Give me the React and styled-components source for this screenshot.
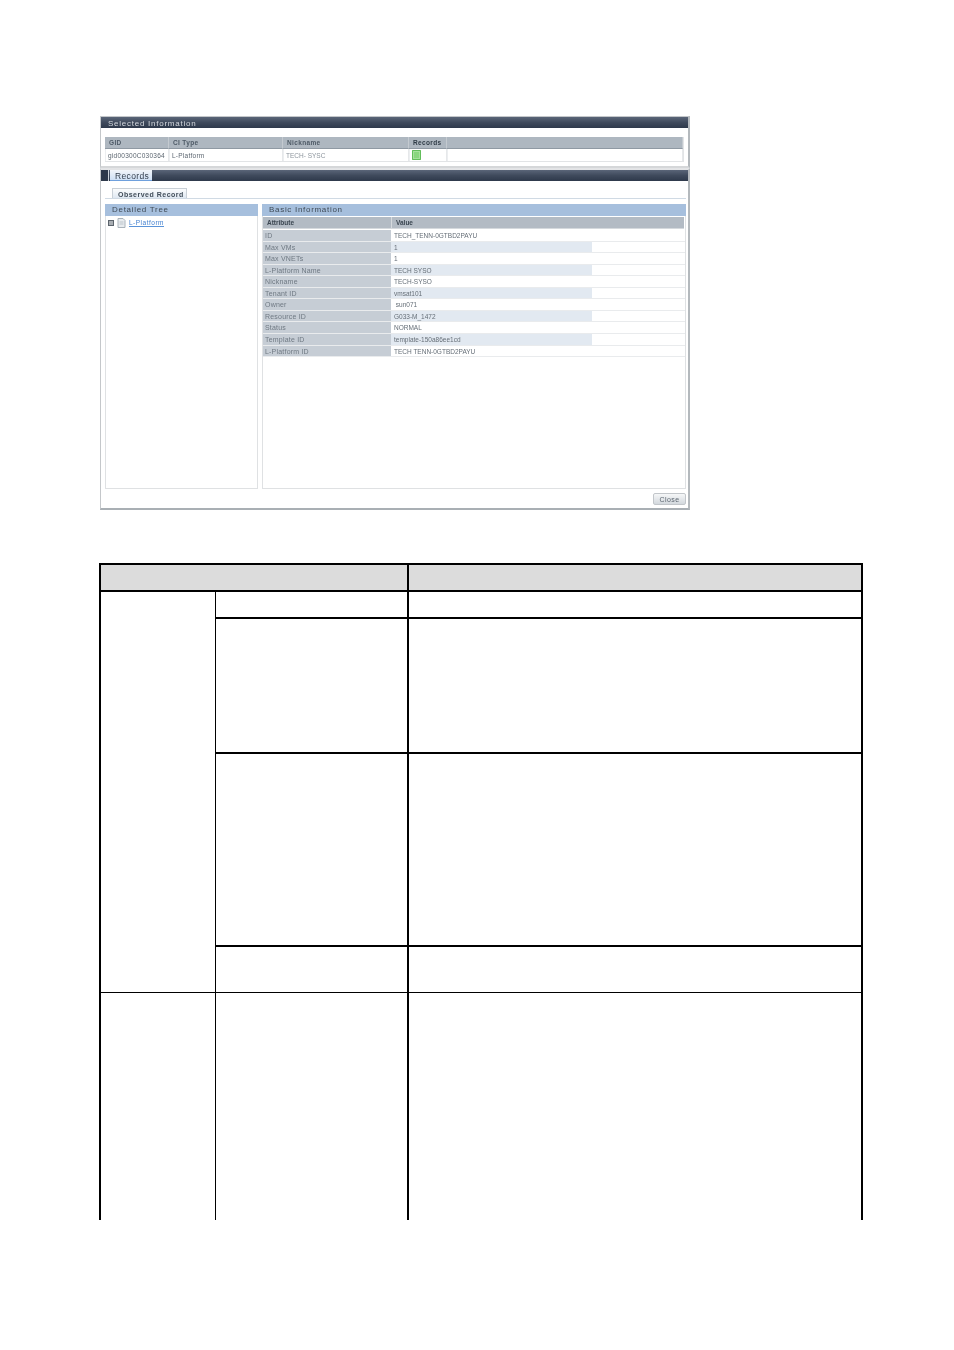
import React from "react";
import styled, { createGlobalStyle } from "styled-components";

const GlobalStyle = createGlobalStyle`
  html, body {
    margin: 0;
    padding: 0;
    background: #fff;
  }
`;

const basics = [
  ["ID", "TECH_TENN-0GTBD2PAYU", false],
  ["Max VMs", "1", true],
  ["Max VNETs", "1", false],
  ["L-Platform Name", "TECH SYSO", true],
  ["Nickname", "TECH-SYSO", false],
  ["Tenant ID", "vmsat101", true],
  ["Owner", " sun071", false],
  ["Resource ID", "G033-M_1472", true],
  ["Status", "NORMAL", false],
  ["Template ID", "template-150a86ee1cd", true],
  ["L-Platform ID", "TECH TENN-0GTBD2PAYU", false],
];

// rows sit on a 11.55px pitch, rounded so every separator lands on a pixel
const rowHeight = (i) => Math.round((i + 1) * 11.55) - Math.round(i * 11.55);

export default function App() {
  return (
    <Page>
      <GlobalStyle />
      <Shot>
        <SelectedPanel>
          <DarkBar>
            <BarTitle>Selected Information</BarTitle>
          </DarkBar>
          <SelectedBody>
            <SelectedGrid>
              <HeadCell>GID</HeadCell>
              <HeadCell>CI Type</HeadCell>
              <HeadCell>Nickname</HeadCell>
              <HeadCell $dark>Records</HeadCell>
              <HeadCell />
              <DataCell>gid00300C030364</DataCell>
              <DataCell>L-Platform</DataCell>
              <DataCell $faint>TECH- SYSC</DataCell>
              <DataCell>
                <GreenIcon />
              </DataCell>
              <DataCell />
            </SelectedGrid>
          </SelectedBody>
        </SelectedPanel>

        <RecordsPanel>
          <DarkBar>
            <BarStub />
            <RecordsTab>Records</RecordsTab>
          </DarkBar>
          <TabRow>
            <SubTab>Observed Record</SubTab>
          </TabRow>
          <Columns>
            <TreePane>
              <PaneTitle>Detailed Tree</PaneTitle>
              <TreeRow>
                <Expander />
                <svg width="9" height="10" viewBox="0 0 9 10">
                  <path d="M1 .5h5l2 2v7H1z" fill="#e8ecef" stroke="#a9b2ba" />
                  <path d="M2.5 4h4M2.5 6h4" stroke="#bcc4cb" />
                </svg>
                <TreeLink>L-Platform</TreeLink>
              </TreeRow>
            </TreePane>
            <InfoPane>
              <PaneTitle>Basic Information</PaneTitle>
              <InfoHead>
                <InfoHeadCell>Attribute</InfoHeadCell>
                <InfoHeadCell>Value</InfoHeadCell>
              </InfoHead>
              {basics.map(([name, value, shaded], i) => (
                <InfoRow key={name} $h={rowHeight(i)}>
                  <AttrCell>{name}</AttrCell>
                  <ValueCell $shaded={shaded}>{value}</ValueCell>
                </InfoRow>
              ))}
            </InfoPane>
          </Columns>
          <Footer>
            <CloseButton>Close</CloseButton>
          </Footer>
        </RecordsPanel>
      </Shot>

      <DocTable>
        <colgroup>
          <col width="116" />
          <col width="192" />
          <col width="456" />
        </colgroup>
        <tbody>
          <HeadRow>
            <HeadGroup colSpan="2" />
            <DescCell />
          </HeadRow>
          <Row $h={27}>
            <GroupCell rowSpan="4" />
            <ItemCell />
            <DescCell />
          </Row>
          <Row $h={135}>
            <ItemCell />
            <DescCell />
          </Row>
          <Row $h={193}>
            <ItemCell />
            <DescCell />
          </Row>
          <Row $h={47}>
            <ItemCell />
            <DescCell />
          </Row>
          <Row $h={228}>
            <GroupCell $thin />
            <ItemCell $thin />
            <DescCell $thin />
          </Row>
        </tbody>
      </DocTable>
    </Page>
  );
}

const Page = styled.div`
  width: 954px;
  height: 1350px;
  box-sizing: border-box;
  padding: 116px 0 0 99px;
  overflow: hidden;
  background: #fff;
`;

const Shot = styled.div`
  width: 590px;
  height: 394px;
  margin-left: 1px;
  display: flex;
  flex-direction: column;
  font-family: "Liberation Sans", Arial, sans-serif;
  font-size: 7px;
  color: #5c6670;
  filter: blur(0.45px);
`;

const SelectedPanel = styled.section`
  height: 52px;
  flex: none;
  box-sizing: border-box;
  border: 1px solid #c4c7ca;
  border-right: 2px solid #b4b9bd;
  border-bottom: 2px solid #d5d7d9;
  display: flex;
  flex-direction: column;
`;

const DarkBar = styled.div`
  height: 11px;
  flex: none;
  display: flex;
  align-items: flex-end;
  background: linear-gradient(#5a6578, #3f4a5c 50%, #2e394b);
`;

const BarTitle = styled.h2`
  margin: 3px 0 0 7px;
  align-self: center;
  font-size: 8px;
  line-height: 10px;
  font-weight: 400;
  letter-spacing: 0.75px;
  color: #d5d9de;
`;

const SelectedBody = styled.div`
  padding: 9px 4px 0 4px;
`;

const SelectedGrid = styled.div`
  display: grid;
  grid-template-columns: 64px 114px 126px 38px 1fr;
  grid-template-rows: 12px 12px;
  border-bottom: 1px solid #e2e4e6;
  border-right: 1px solid #e2e4e6;
`;

const HeadCell = styled.div`
  display: flex;
  align-items: center;
  padding-left: 4px;
  background: #aeb7c0;
  border-right: 1px solid #c4cad0;
  border-bottom: 1px solid #8f99a3;
  font-weight: 700;
  font-size: 6.5px;
  letter-spacing: 0.35px;
  color: ${(p) => (p.$dark ? "#2f3b46" : "#4e5a66")};
`;

const DataCell = styled.div`
  display: flex;
  align-items: center;
  padding-left: 2px;
  border-right: 1px solid #e6e8ea;
  border-left: 1px solid #eceef0;
  font-size: 6.5px;
  letter-spacing: ${(p) => (p.$faint ? "0" : "0.25px")};
  color: ${(p) => (p.$faint ? "#8d959d" : "#5c6670")};
`;

const GreenIcon = styled.span`
  display: block;
  width: 9px;
  height: 10px;
  border-radius: 1px;
  background: #8ad67f;
  box-shadow: inset 0 0 0 1px #62bd5a, inset 0 0 0 2px #a6e09c;
`;

const RecordsPanel = styled.section`
  flex: 1;
  box-sizing: border-box;
  display: flex;
  flex-direction: column;
  border-top: 2px solid #e3e4e6;
  border-left: 1px solid #c4c7ca;
  border-right: 2px solid #b4b9bd;
  border-bottom: 2px solid #a9afb4;
`;

const BarStub = styled.span`
  width: 7px;
  align-self: stretch;
  background: #2e394b;
  border-right: 1px solid #d0d6dc;
`;

const RecordsTab = styled.div`
  height: 11px;
  box-sizing: border-box;
  margin-left: 1px;
  padding: 2px 3px 0 5px;
  background: linear-gradient(#f2f5f9, #cfe0f4);
  border-bottom: 1px solid #6fa0dd;
  font-size: 8.5px;
  line-height: 9px;
  letter-spacing: 0.35px;
  color: #333e4c;
`;

const TabRow = styled.div`
  height: 18px;
  flex: none;
  box-sizing: border-box;
  display: flex;
  align-items: flex-end;
  margin: 0 2px 0 4px;
  padding-left: 7px;
  border-bottom: 1px solid #d0dae4;
`;

const SubTab = styled.div`
  width: 75px;
  height: 10px;
  box-sizing: border-box;
  padding: 2px 0 0 5px;
  border: 1px solid #c9d0d7;
  border-bottom: none;
  background: linear-gradient(#fbfcfd, #dfe8f2);
  font-size: 7px;
  font-weight: 700;
  line-height: 8px;
  letter-spacing: 0.5px;
  white-space: nowrap;
  color: #414d59;
`;

const Columns = styled.div`
  height: 285px;
  flex: none;
  display: flex;
  gap: 4px;
  margin: 5px 2px 0 4px;
`;

const PaneTitle = styled.h3`
  margin: 0 -1px;
  height: 12px;
  box-sizing: border-box;
  padding: 0 7px;
  background: #a6bfdd;
  font-size: 8px;
  font-weight: 400;
  line-height: 12px;
  letter-spacing: 0.7px;
  color: #3f4a56;
`;

const TreePane = styled.div`
  width: 153px;
  flex: none;
  box-sizing: border-box;
  border: 1px solid #dfe1e3;
  border-top: none;
`;

const TreeRow = styled.div`
  display: flex;
  align-items: center;
  gap: 3px;
  padding: 1px 0 0 2px;
  height: 11px;
`;

const Expander = styled.span`
  width: 4px;
  height: 4px;
  border: 1px solid #5c646c;
  background: #a9aeb3;
`;

const TreeLink = styled.a`
  color: #3f7fd0;
  border-bottom: 1px solid #5a93d8;
  line-height: 7px;
  font-size: 6.5px;
  letter-spacing: 0.5px;
`;

const InfoPane = styled.div`
  flex: 1;
  box-sizing: border-box;
  border: 1px solid #dfe1e3;
  border-top: none;
`;

const InfoHead = styled.div`
  display: grid;
  grid-template-columns: 128px 1fr;
  height: 12px;
  margin: 1px 1px 1px 0;
  background: #b3bbc4;
  border-bottom: 1px solid #d5d9dd;
  box-sizing: border-box;
`;

const InfoHeadCell = styled.div`
  padding-left: 4px;
  font-size: 6.5px;
  font-weight: 700;
  line-height: 11px;
  color: #3b4651;
  & + & {
    border-left: 1px solid #d6dade;
  }
`;

const InfoRow = styled.div`
  display: grid;
  grid-template-columns: 128px 1fr;
  grid-template-rows: minmax(0, 1fr);
  height: ${(p) => p.$h}px;
  border-bottom: 1px solid #e9ebed;
  box-sizing: border-box;
`;

const AttrCell = styled.div`
  min-height: 0;
  overflow: hidden;
  padding-left: 2px;
  background: #c6cdd5;
  font-size: 7px;
  line-height: 11px;
  letter-spacing: 0.2px;
  color: #6f7983;
`;

const ValueCell = styled.div`
  min-height: 0;
  overflow: hidden;
  padding-left: 3px;
  white-space: pre;
  font-size: 6.5px;
  line-height: 11px;
  color: #656e77;
  background: ${(p) =>
    p.$shaded ? "linear-gradient(90deg, #e2e9f1 201px, #fff 201px)" : "#fff"};
`;

const Footer = styled.div`
  flex: 1;
  display: flex;
  align-items: center;
  justify-content: flex-end;
  padding: 1px 2px 0 0;
`;

const CloseButton = styled.button`
  width: 33px;
  height: 12px;
  padding: 0;
  border: 1px solid #c2c6ca;
  border-radius: 2px;
  background: linear-gradient(#f6f7f8, #d3d8dd);
  font-family: inherit;
  font-size: 7px;
  letter-spacing: 0.4px;
  color: #5c6670;
`;

const DocTable = styled.table`
  margin: 53px 0 0 0;
  width: 764px;
  table-layout: fixed;
  border-collapse: separate;
  border-spacing: 0;
`;

const HeadRow = styled.tr`
  height: 27px;
  background: #dcdcdc;
`;

const Row = styled.tr`
  height: ${(p) => p.$h}px;
`;

const HeadGroup = styled.th`
  padding: 0;
  border-top: 2px solid #000;
  border-left: 2px solid #000;
`;

const GroupCell = styled.td`
  padding: 0;
  border-top: ${(p) => (p.$thin ? 1 : 2)}px solid #000;
  border-left: 2px solid #000;
`;

const ItemCell = styled.td`
  padding: 0;
  border-top: ${(p) => (p.$thin ? 1 : 2)}px solid #000;
  border-left: 1px solid #000;
`;

const DescCell = styled.td`
  padding: 0;
  border-top: ${(p) => (p.$thin ? 1 : 2)}px solid #000;
  border-left: 2px solid #000;
  border-right: 2px solid #000;
`;
